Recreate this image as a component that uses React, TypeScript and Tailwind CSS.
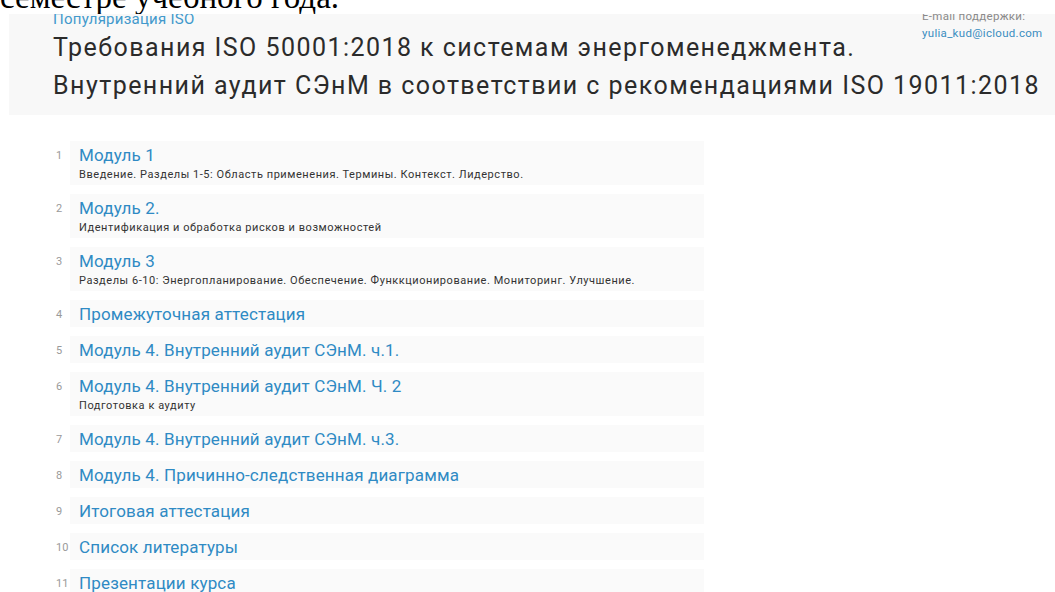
type Section = {
  n: number;
  title: string;
  desc?: string;
};

const sections: Section[] = [
  {
    n: 1,
    title: "Модуль 1",
    desc: "Введение. Разделы 1-5: Область применения. Термины. Контекст. Лидерство.",
  },
  { n: 2, title: "Модуль 2.", desc: "Идентификация и обработка рисков и возможностей" },
  {
    n: 3,
    title: "Модуль 3",
    desc: "Разделы 6-10: Энергопланирование. Обеспечение. Функкционирование. Мониторинг. Улучшение.",
  },
  { n: 4, title: "Промежуточная аттестация" },
  { n: 5, title: "Модуль 4. Внутренний аудит СЭнМ. ч.1." },
  { n: 6, title: "Модуль 4. Внутренний аудит СЭнМ. Ч. 2", desc: "Подготовка к аудиту" },
  { n: 7, title: "Модуль 4. Внутренний аудит СЭнМ. ч.3." },
  { n: 8, title: "Модуль 4. Причинно-следственная диаграмма" },
  { n: 9, title: "Итоговая аттестация" },
  { n: 10, title: "Список литературы" },
  { n: 11, title: "Презентации курса" },
];

function SectionRow({ s }: { s: Section }) {
  return (
    <li className="flex">
      <span className="w-[14px] shrink-0 pt-[7px] text-[11px] leading-4 text-[#9a9a9a]">
        {s.n}
      </span>
      <div className="w-[634px] bg-[#fafafa] pl-[9px] pt-[4px] pb-[3px]">
        <a className="block text-[17px] leading-5 tracking-[0.15px] text-[#2f8ac4]">
          {s.title}
        </a>
        {s.desc && (
          <p className="pt-[2px] text-[11px] leading-[15px] tracking-[0.55px] text-[#333]">
            {s.desc}
          </p>
        )}
      </div>
    </li>
  );
}

export default function App() {
  return (
    <div className="h-[592px] w-[1055px] overflow-hidden bg-white font-['Roboto',sans-serif]">
      {/* tail of the document paragraph above the page shot */}
      <div className="h-[14px] overflow-hidden">
        <p className="-mt-[19px] font-['Liberation_Serif',serif] text-[33px] leading-8 text-black">
          семестре учебного года.
        </p>
      </div>

      {/* course header */}
      <header className="ml-[9px] h-[101px] overflow-hidden bg-[#f8f8f8] pl-[44px]">
        <div className="float-right -mt-[6px] w-[133px] text-[11.5px] leading-[17px] tracking-[0.3px]">
          <div className="text-[#8a8a8a]">E-mail поддержки:</div>
          <a className="text-[#3a8dc0]">yulia_kud@icloud.com</a>
        </div>
        <div className="-mt-[3px] text-[15px] leading-4 tracking-[0.25px] text-[#4299cc]">
          Популяризация ISO
        </div>
        <h1 className="mt-[2px] text-[25px] leading-[38px] tracking-[1.45px] text-[#2b2b2b]">
          Требования ISO 50001:2018 к системам энергоменеджмента.
          <br />
          Внутренний аудит СЭнМ в соответствии с рекомендациями ISO 19011:2018
        </h1>
      </header>

      {/* course sections */}
      <ul className="mt-[26px] ml-[56px] flex flex-col gap-[9px]">
        {sections.map((s) => (
          <SectionRow key={s.n} s={s} />
        ))}
      </ul>
    </div>
  );
}
